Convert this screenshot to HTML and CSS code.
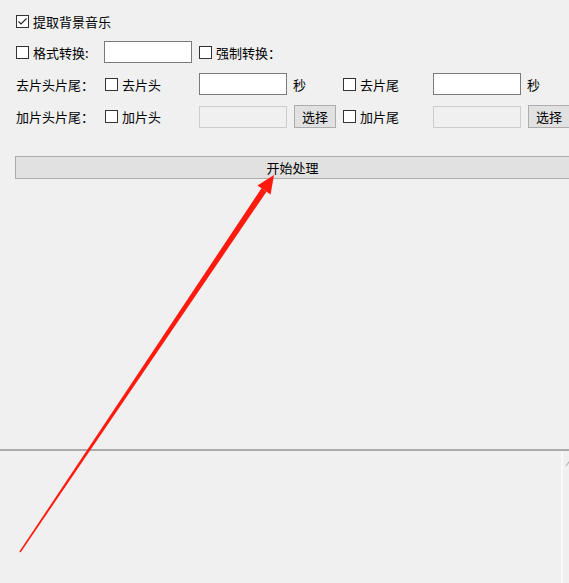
FILE: index.html
```html
<!DOCTYPE html>
<html lang="zh-CN">
<head>
<meta charset="utf-8">
<title>处理</title>
<link rel="stylesheet" href="styles.css">
</head>
<body>
<div class="top">
  <div class="row r1">
    <label class="chk"><span class="box checked"><svg width="11" height="11" viewBox="0 0 11 11"><path d="M1.5 5.5 L4 8 L9.5 2.5" fill="none" stroke="#222" stroke-width="1.1"/></svg></span><span>提取背景音乐</span></label>
  </div>
  <div class="row r2">
    <label class="chk w88"><span class="box"></span><span>格式转换:</span></label>
    <span class="inp"></span>
    <label class="chk ml7"><span class="box"></span><span>强制转换：</span></label>
  </div>
  <div class="row r3">
    <span class="lbl w89">去片头片尾：</span>
    <label class="chk w94"><span class="box"></span><span>去片头</span></label>
    <span class="inp"></span>
    <span class="unit w56">秒</span>
    <label class="chk w90"><span class="box"></span><span>去片尾</span></label>
    <span class="inp"></span>
    <span class="unit">秒</span>
  </div>
  <div class="row r4">
    <span class="lbl w89">加片头片尾：</span>
    <label class="chk w94"><span class="box"></span><span>加片头</span></label>
    <span class="inp disabled"></span>
    <button class="btn ml7">选择</button>
    <label class="chk w90 ml7"><span class="box"></span><span>加片尾</span></label>
    <span class="inp disabled"></span>
    <button class="btn ml7">选择</button>
  </div>
  <button class="start">开始处理</button>
</div>
<div class="bottom">
  <div class="log"></div>
  <div class="vline"></div>
  <div class="sb"><svg width="6" height="8" viewBox="0 0 6 8"><path d="M1 6 L4 2 L6 4" fill="none" stroke="#b5b5b5" stroke-width="1.2"/></svg></div>
</div>
<svg class="arrow" width="569" height="583" viewBox="0 0 569 583">
  <polygon points="19.4,551.6 20.6,552.4 266.5,191.7 261.5,188.3" fill="#ff1a0e"/>
  <polygon points="274,175 257.4,185.5 270.6,194.5" fill="#ff1a0e"/>
</svg>
</body>
</html>
```
FILE: styles.css
```css
html, body {
  margin: 0;
  padding: 0;
  background: #f0f0f0;
  width: 569px;
  height: 583px;
  overflow: hidden;
  font-family: "Noto Sans CJK SC", "Microsoft YaHei", sans-serif;
  font-size: 13px;
  color: #000;
}

.top {
  height: 449px;
  box-sizing: border-box;
  padding: 10px 0 0 16px;
}

.row {
  display: flex;
  align-items: center;
  height: 22px;
  white-space: nowrap;
}

.row > * { flex: none; }

.r1 { margin-bottom: 9px; }
.r2 { margin-bottom: 10px; }
.r3 { margin-bottom: 10px; }
.r4 { height: 23px; }

.chk {
  display: flex;
  align-items: center;
  gap: 4px;
  line-height: 13px;
}

.box {
  width: 13px;
  height: 13px;
  box-sizing: border-box;
  border: 1px solid #333;
  background: #fff;
  display: flex;
  align-items: center;
  justify-content: center;
  flex: none;
}

.box svg { display: block; }

.w88 { width: 88px; }
.w89 { width: 89px; }
.w94 { width: 94px; }
.w90 { width: 90px; }
.w56 { width: 56px; }
.ml7 { margin-left: 7px; }

.inp {
  width: 88px;
  height: 22px;
  box-sizing: border-box;
  border: 1px solid #7a7a7a;
  background: #fff;
}

.inp.disabled {
  border-color: #cccccc;
  background: #f0f0f0;
}

.unit {
  padding-left: 6px;
  box-sizing: border-box;
}

.btn {
  width: 42px;
  height: 23px;
  box-sizing: border-box;
  border: 1px solid #adadad;
  background: #e1e1e1;
  font-family: inherit;
  font-size: 13px;
  color: #000;
  padding: 0;
}

.start {
  display: block;
  margin: 28px 0 0 -1px;
  width: 555px;
  height: 23px;
  box-sizing: border-box;
  border: 1px solid #adadad;
  background: #e1e1e1;
  font-family: inherit;
  font-size: 13px;
  color: #000;
  padding: 0;
  line-height: 21px;
}

.bottom {
  height: 134px;
  border-top: 2px solid #ababab;
  display: flex;
}

.log { flex: 1; }

.vline {
  width: 2px;
  background: #f9f9f9;
}

.sb {
  width: 6px;
  padding-top: 9px;
  box-sizing: border-box;
}

.sb svg { display: block; margin-left: 2px; }

.arrow {
  position: absolute;
  left: 0;
  top: 0;
  pointer-events: none;
}
```
